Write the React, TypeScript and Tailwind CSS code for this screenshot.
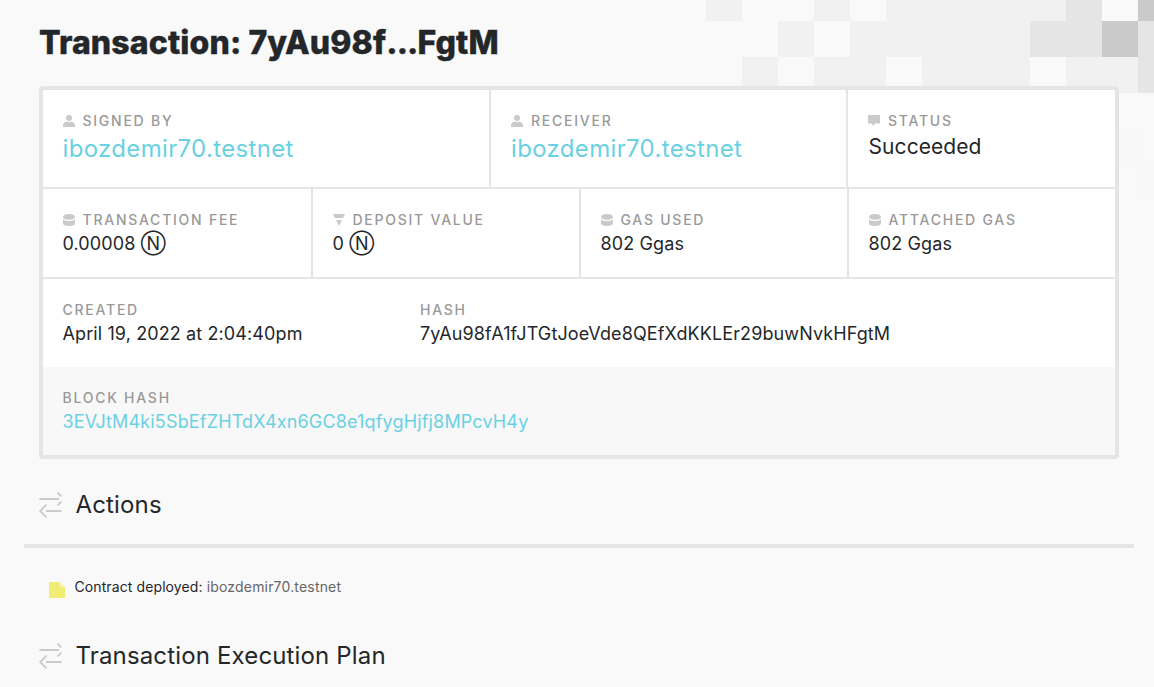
import type { ReactNode } from "react";

const PIXELS: [number, number, number, string][] = [
  [706, -15, 1, "#f1f1f1"],
  [814, -15, 1, "#f1f1f1"],
  [886, -15, 5, "#f1f1f1"],
  [1066, -15, 1, "#e5e5e5"],
  [1138, -15, 1, "#cacaca"],
  [778, 21, 1, "#f1f1f1"],
  [850, 21, 5, "#f1f1f1"],
  [1030, 21, 2, "#e5e5e5"],
  [1102, 21, 1, "#cacaca"],
  [1138, 21, 1, "#e5e5e5"],
  [742, 57, 1, "#f1f1f1"],
  [814, 57, 2, "#f1f1f1"],
  [922, 57, 3, "#f1f1f1"],
  [1066, 57, 2, "#f1f1f1"],
  [1138, 57, 1, "#e5e5e5"],
  [1102, 129, 1, "#f8f8f8"],
  [1138, 165, 1, "#f8f8f8"],
];

function PixelBackdrop() {
  return (
    <svg className="absolute inset-0 h-[687px] w-[1154px]" shapeRendering="crispEdges">
      {PIXELS.map(([x, y, n, fill]) => (
        <rect key={`${x}-${y}`} x={x} y={y} width={n * 36} height={36} fill={fill} />
      ))}
    </svg>
  );
}

function PersonIcon() {
  return (
    <svg className="h-3 w-3" viewBox="0 0 12 12" fill="#cacaca">
      <circle cx="6" cy="3" r="3" />
      <path d="M0 12V10.5C0 8.3 1.8 6.8 3.6 6.6C5 7.5 7 7.5 8.4 6.6C10.2 6.8 12 8.3 12 10.5V12Z" />
    </svg>
  );
}

function StackIcon() {
  return (
    <svg className="h-3 w-3" viewBox="0 0 12 12" fill="#cacaca">
      <ellipse cx="6" cy="2.9" rx="6" ry="2.9" />
      <path d="M0 5.2C1.2 6.5 3.4 7 6 7S10.8 6.5 12 5.2V9.2C12 10.9 9.3 12 6 12S0 10.9 0 9.2Z" />
    </svg>
  );
}

function FunnelIcon() {
  return (
    <svg className="h-3 w-3" viewBox="0 0 12 12" fill="#cacaca">
      <path d="M0 0H12L10 4H2Z" />
      <path d="M3 6H9L6 12Z" />
    </svg>
  );
}

function BubbleIcon() {
  return (
    <svg className="-ml-[0.5px] h-3 w-3" viewBox="0 0 12 12" fill="#cacaca">
      <path d="M0 0H12V8.5H6.5L6 11.2L3.5 8.5H0Z" />
    </svg>
  );
}

function ArrowsIcon() {
  return (
    <svg className="h-[26px] w-[23px]" viewBox="0 0 23 26" fill="none" stroke="#cacaca" strokeWidth="1.8">
      <path d="M0.5 7H20M18.5 0.5L22.3 4.4M22.3 9.6L18.5 13.4" />
      <path d="M22.5 19H7M7.5 12.7L1.2 19L7.5 25.3" />
    </svg>
  );
}

function Cell({
  label,
  icon,
  className = "",
  children,
}: {
  label: string;
  icon?: ReactNode;
  className?: string;
  children: ReactNode;
}) {
  return (
    <div className={`pr-5 pt-[21px] ${className}`}>
      <div className="flex h-5 items-center gap-2 whitespace-nowrap text-[14px] font-medium leading-5 tracking-[1.75px] text-[#999999]">
        {icon}
        <span>{label}</span>
      </div>
      {children}
    </div>
  );
}

const VALUE = "h-7 whitespace-nowrap text-[18px] leading-7 tracking-[0.11px]";
const LINK_VALUE = "h-7 whitespace-nowrap text-[18px] leading-7 tracking-[0.16px] text-[#6ad1e3]";
const ACCOUNT = "whitespace-nowrap text-[24px] leading-[36px] tracking-[0.34px] text-[#6ad1e3]";
const DIVIDED = "border-l-2 border-[#e5e5e5]";

function SectionTitle({ children }: { children: ReactNode }) {
  return (
    <div className="flex h-9 items-center gap-[13.5px] pl-[39px]">
      <ArrowsIcon />
      <h2 className="text-[24px] leading-9 tracking-[0.15px]">{children}</h2>
    </div>
  );
}

export default function App() {
  return (
    <div className="relative h-[687px] w-[1154px] overflow-hidden bg-[#f9f9f9] font-['Inter',sans-serif] text-[#24272a]">
      <PixelBackdrop />
      <main className="relative">
        <h1 className="h-[86px] whitespace-nowrap pl-[39px] pt-[22px] text-[32px] font-extrabold leading-[42px] tracking-[0.13px] [-webkit-text-stroke:0.4px_#24272a]">
          Transaction: 7yAu98f<span className="tracking-[-0.9px]">...</span>FgtM
        </h1>

        <section className="ml-[39px] h-[373px] w-[1080px] overflow-hidden rounded-[4px] border-4 border-[#e5e5e5] bg-white">
          <div className="flex h-[99px] border-b-2 border-[#e5e5e5]">
            <Cell label="SIGNED BY" icon={<PersonIcon />} className="w-[446px] pl-[19.5px]">
              <div className={ACCOUNT}>ibozdemir70.testnet</div>
            </Cell>
            <Cell label="RECEIVER" icon={<PersonIcon />} className={`w-[357px] pl-5 ${DIVIDED}`}>
              <div className={ACCOUNT}>ibozdemir70.testnet</div>
            </Cell>
            <Cell label="STATUS" icon={<BubbleIcon />} className={`w-[269px] pl-[20.5px] ${DIVIDED}`}>
              <div className="text-[21px] leading-[31px] tracking-[0.08px]">Succeeded</div>
            </Cell>
          </div>
          <div className="grid h-[90px] grid-cols-4 border-b-2 border-[#e5e5e5]">
            <Cell label="TRANSACTION FEE" icon={<StackIcon />} className="pl-[19.5px]">
              <div className={VALUE}>0.00008 Ⓝ</div>
            </Cell>
            <Cell label="DEPOSIT VALUE" icon={<FunnelIcon />} className={`pl-[19.5px] ${DIVIDED}`}>
              <div className={VALUE}>0 Ⓝ</div>
            </Cell>
            <Cell label="GAS USED" icon={<StackIcon />} className={`pl-[19.5px] ${DIVIDED}`}>
              <div className={VALUE}>802 Ggas</div>
            </Cell>
            <Cell label="ATTACHED GAS" icon={<StackIcon />} className={`pl-[19.5px] ${DIVIDED}`}>
              <div className={VALUE}>802 Ggas</div>
            </Cell>
          </div>
          <div className="flex h-[88px]">
            <Cell label="CREATED" className="w-[357px] pl-[19.5px]">
              <div className={VALUE}>April 19, 2022 at 2:04:40pm</div>
            </Cell>
            <Cell label="HASH" className="pl-5">
              <div className={VALUE}>7yAu98fA1fJTGtJoeVde8QEfXdKKLEr29buwNvkHFgtM</div>
            </Cell>
          </div>
          <div className="h-[88px] bg-[#f8f8f8]">
            <Cell label="BLOCK HASH" className="pl-[19.5px]">
              <div className={LINK_VALUE}>3EVJtM4ki5SbEfZHTdX4xn6GC8e1qfygHjfj8MPcvH4y</div>
            </Cell>
          </div>
        </section>

        <div className="pt-[28px]">
          <SectionTitle>Actions</SectionTitle>
        </div>
        <div className="ml-6 mt-[21px] h-1 w-[1110px] bg-[#e5e5e5]" />
        <div className="mt-[29px] flex h-5 items-center pl-[49px] text-[14px] leading-5">
          <svg className="mt-[5px] h-4 w-4" viewBox="0 0 16 16">
            <path d="M0 0H11V5H16V16H0Z" fill="#f0ec74" />
            <path d="M11 0L16 5H11Z" fill="#f7f5b8" />
          </svg>
          <span className="ml-[9.5px] tracking-[0.1px]">
            Contract deployed: <span className="tracking-[0.18px] text-[#666666]">ibozdemir70.testnet</span>
          </span>
        </div>
        <div className="pt-[41px]">
          <SectionTitle>Transaction Execution Plan</SectionTitle>
        </div>
      </main>
    </div>
  );
}
